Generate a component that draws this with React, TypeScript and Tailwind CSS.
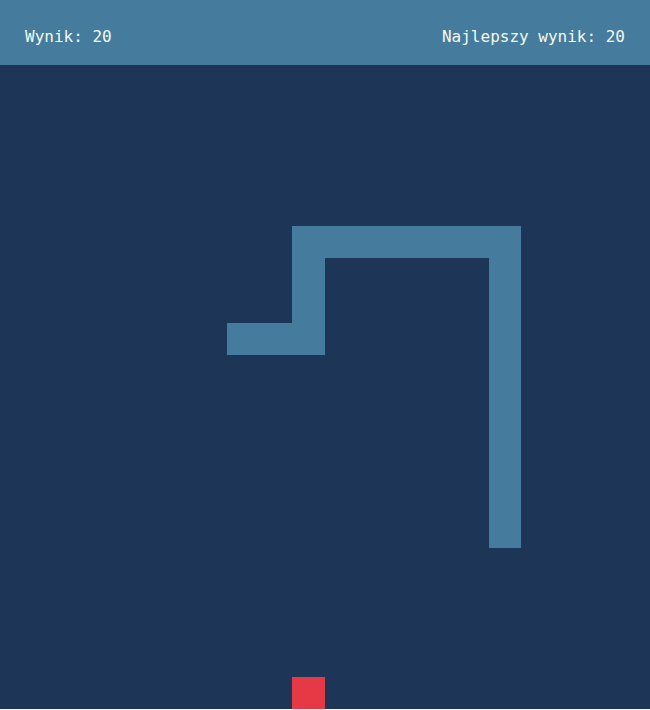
import React from "react";

const segs = [
  { l: 292, t: 226, w: 229, h: 32 },
  { l: 292, t: 226, w: 33, h: 129 },
  { l: 227, t: 323, w: 98, h: 32 },
  { l: 489, t: 226, w: 32, h: 322 },
];

export default function App() {
  return (
    <div className="w-[650px] h-[710px] bg-[#f1faee] flex flex-col" style={{ fontFamily: '"DejaVu Sans Mono", monospace' }}>
      <div className="h-[65px] bg-[#457b9d] flex items-center justify-between px-[25px] text-[16px] text-[#f1faee] pt-[8px]">
        <span>Wynik: 20</span>
        <span>Najlepszy wynik: 20</span>
      </div>
      <div className="relative h-[644px] bg-[#1d3557]">
        {segs.map((s, i) => (
          <div
            key={i}
            className="absolute bg-[#457b9d]"
            style={{ left: s.l, top: s.t - 65, width: s.w, height: s.h }}
          />
        ))}
        <div className="absolute bg-[#e63946] left-[292px] top-[612px] w-[33px] h-[32px]" />
      </div>
    </div>
  );
}
